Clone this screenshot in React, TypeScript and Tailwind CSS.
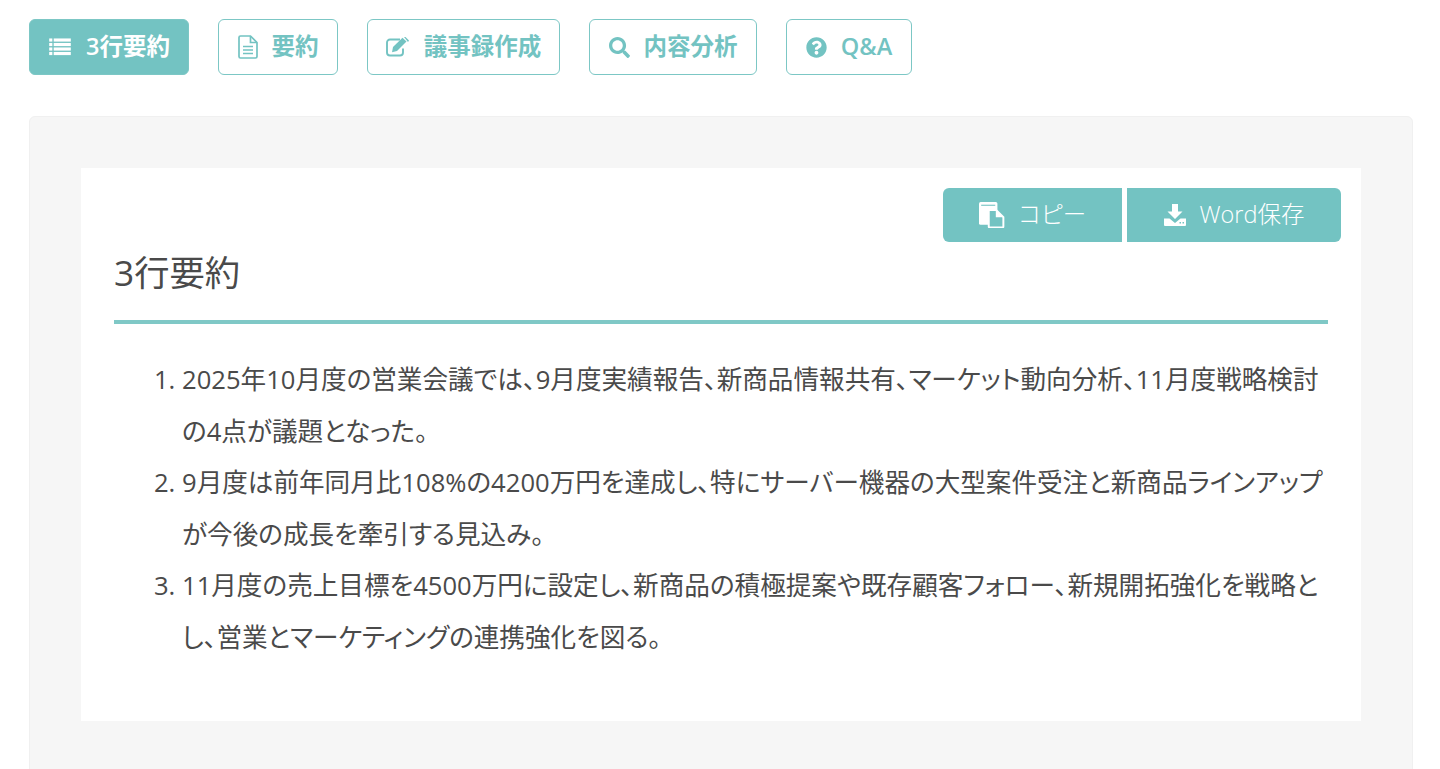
import { FaSearch, FaQuestionCircle } from "react-icons/fa";

const font = "font-['Open_Sans','Noto_Sans_CJK_JP',sans-serif] [font-feature-settings:'palt']";

const ListIcon = () => (
  <svg viewBox="0 0 24 20" className="h-[18px] w-[24px]" fill="currentColor">
    <rect x="0" y="0.5" width="3.5" height="3.5" />
    <rect x="5" y="0.5" width="19" height="3.5" />
    <rect x="0" y="5.5" width="3.5" height="3.5" />
    <rect x="5" y="5.5" width="19" height="3.5" />
    <rect x="0" y="10.5" width="3.5" height="3.5" />
    <rect x="5" y="10.5" width="19" height="3.5" />
    <rect x="0" y="15.5" width="3.5" height="3.5" />
    <rect x="5" y="15.5" width="19" height="3.5" />
  </svg>
);

const FileIcon = () => (
  <svg viewBox="0 0 20 24" className="h-[24px] w-[20px]" fill="none" stroke="currentColor" strokeWidth="1.7">
    <path d="M2.5 1h10l6.5 6.5v14a1.5 1.5 0 0 1-1.5 1.5h-15A1.5 1.5 0 0 1 1 21.500v-19A1.500 1.500 0 0 1 2.500 1z" />
    <path d="M12.500 1v6.500H19" />
    <path d="M5 11.500h10M5 15h10M5 18.500h10" />
  </svg>
);

const EditIcon = () => (
  <svg viewBox="0 0 24 20" className="h-[20px] w-[24px]" fill="none" stroke="currentColor">
    <path d="M14 2.500H4a3 3 0 0 0-3 3v10a3 3 0 0 0 3 3h10a3 3 0 0 0 3-3v-4" strokeWidth="1.900" />
    <path d="M7 10 16.500 0.800l4 3.700-9.500 9.500-5 1.200z" fill="currentColor" stroke="none" />
    <path d="M18 0l1-.5 4 4-1 1.500z" fill="currentColor" stroke="none" />
  </svg>
);

const CopyIcon = () => (
  <svg viewBox="0 0 24 24" className="h-[26px] w-[26px]">
    <rect x="0" y="0" width="17" height="21" rx="1.500" fill="white" />
    <rect x="2" y="2.500" width="13" height="1" fill="#73c3c2" />
    <path d="M10 7.500h6l6.500 6.500v8.500a1 1 0 0 1-1 1H10a1 1 0 0 1-1-1v-14a1 1 0 0 1 1-1z" fill="#73c3c2" stroke="white" strokeWidth="1.800" />
    <path d="M15.500 7.500v6.500h7z" fill="white" />
  </svg>
);

const DownloadIcon = () => (
  <svg viewBox="0 0 22 22" className="h-[22px] w-[22px]" fill="white">
    <path d="M8 0h6v7.500h4.500L11 15 3.500 7.500H8z" />
    <path d="M0 14.500h5.500L11 19l5.500-4.500H22V21a1 1 0 0 1-1 1H1a1 1 0 0 1-1-1z" />
    <rect x="15.500" y="18" width="1.500" height="1.500" fill="#73c3c2" />
    <rect x="18.500" y="18" width="1.500" height="1.500" fill="#73c3c2" />
  </svg>
);

const tabs = [
  { id: 1, label: "3行要約", icon: <ListIcon />, active: true, width: "w-[160px]" },
  { id: 2, label: "要約", icon: <FileIcon />, active: false, width: "w-[120px]" },
  { id: 3, label: "議事録作成", icon: <EditIcon />, active: false, width: "w-[193px]" },
  { id: 4, label: "内容分析", icon: <FaSearch className="size-[21px]" />, active: false, width: "w-[168px]" },
  { id: 5, label: "Q&A", icon: <FaQuestionCircle className="size-[21px]" />, active: false, width: "w-[126px]" },
];

const items = [
  "2025年10月度の営業会議では、9月度実績報告、新商品情報共有、マーケット動向分析、11月度戦略検討の4点が議題となった。",
  "9月度は前年同月比108%の4200万円を達成し、特にサーバー機器の大型案件受注と新商品ラインアップが今後の成長を牽引する見込み。",
  "11月度の売上目標を4500万円に設定し、新商品の積極提案や既存顧客フォロー、新規開拓強化を戦略とし、営業とマーケティングの連携強化を図る。",
];

const App = () => {
  return (
    <div className={`${font} h-[769px] overflow-hidden bg-white pl-[29px] pr-[27px] pt-[19px] text-[#4a4a4a]`}>
      <div className="flex gap-[29px]">
        {tabs.map((t) => (
          <button
            key={t.id}
            className={`flex h-[56px] items-center justify-center gap-[14px] rounded-[6px] border-[1.500px] border-[#7cc7c5] text-[23.500px] font-semibold ${t.width} ${
              t.active ? "bg-[#73c3c2] text-white" : "bg-white text-[#73c3c2]"
            }`}
          >
            {t.icon}
            <span>{t.label}</span>
          </button>
        ))}
      </div>

      <div className="mt-[41px] h-[700px] rounded-[6px] border border-[#f0f0f0] bg-[#f6f6f6] px-[51px] pt-[51px]">
        <div className="h-[553px] bg-white pl-[33px] pr-[33px] pt-[20px]">
          <div className="mr-[-13px] flex justify-end gap-[5px]">
            <button className="flex h-[54px] w-[179px] items-center justify-center gap-[14px] rounded-l-[6px] bg-[#73c3c2] text-[23.500px] font-light text-white">
              <CopyIcon />
              <span>コピー</span>
            </button>
            <button className="flex h-[54px] w-[214px] items-center justify-center gap-[14px] rounded-r-[6px] bg-[#73c3c2] text-[23.500px] font-light text-white">
              <DownloadIcon />
              <span>Word保存</span>
            </button>
          </div>
          <h2 className="mt-[6px] border-b-4 border-[#7fc8c6] pb-[24px] text-[35.300px] leading-[48px] font-normal">3行要約</h2>
          <ol className="mt-[30px] list-decimal pl-[68px] text-[25.600px] leading-[51.500px] font-normal">
            {items.map((s, i) => (
              <li key={i}>{s}</li>
            ))}
          </ol>
        </div>
      </div>
    </div>
  );
};

export default App;
